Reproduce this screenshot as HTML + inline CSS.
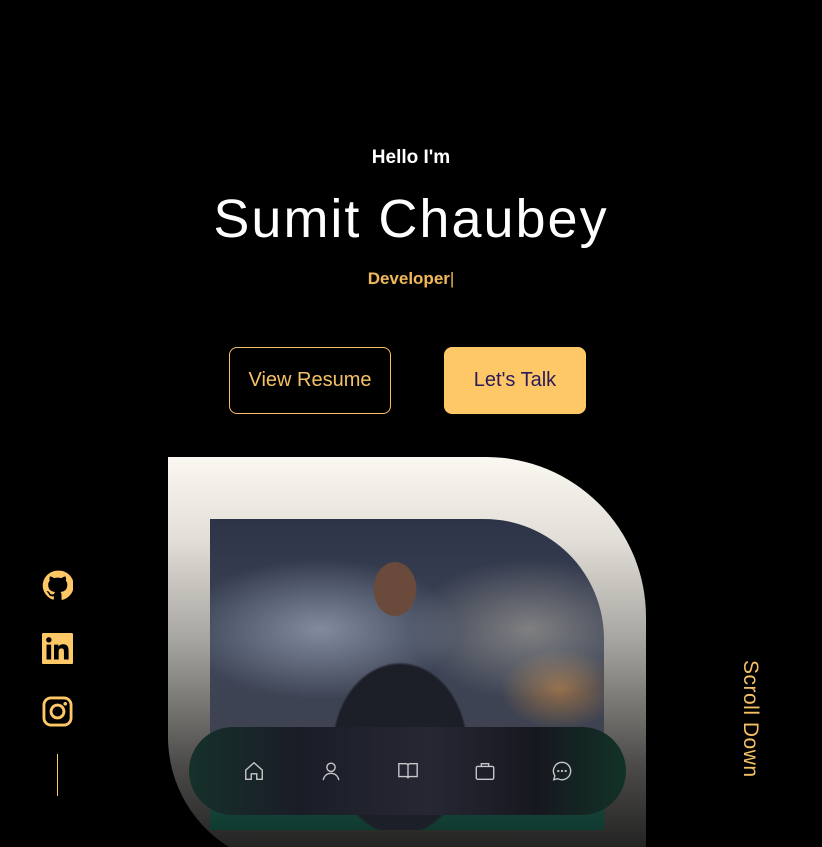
<!DOCTYPE html>
<html style="width:822px;height:847px;overflow:hidden"><head><style>
*{margin:0;padding:0;box-sizing:border-box}
body{width:822px;height:847px;background:#000;overflow:hidden;position:relative;font-family:"Liberation Sans",sans-serif}
.t{position:absolute;left:0;width:822px;text-align:center}
.btn{position:absolute;top:347px;height:67px;border-radius:8px;font-size:20px;display:flex;align-items:center;justify-content:center}
.card{position:absolute;left:168px;top:457px;width:478px;height:410px;border-radius:0 160px 0 130px;background:linear-gradient(180deg,#fbf8f1 0%,#e2ded8 20%,#a6a49f 45%,#4c4b49 75%,#1a1a1a 100%)}
.photo{position:absolute;left:210px;top:519px;width:394px;height:311px;border-radius:0 120px 0 0;overflow:hidden;background:
radial-gradient(ellipse 110px 140px at 190px 230px,#1c1e28 60%,transparent 62%),
radial-gradient(ellipse 30px 38px at 185px 70px,#6a4a3a 70%,transparent 72%),
radial-gradient(ellipse 140px 70px at 110px 110px,rgba(200,210,230,.5),transparent),
radial-gradient(ellipse 120px 70px at 320px 110px,rgba(210,200,180,.45),transparent),
radial-gradient(ellipse 60px 40px at 350px 170px,rgba(230,150,60,.5),transparent),
linear-gradient(180deg,#2e3448 0%,#3d4558 40%,#3e4250 70%,#1d4a3e 85%,#0f3a30 100%)}
.nav{position:absolute;left:189px;top:727px;width:437px;height:88px;border-radius:44px;background:linear-gradient(90deg,#16302a 0%,#1a1d27 25%,#262733 55%,#16181f 80%,#123226 100%);display:flex;align-items:center;justify-content:center;gap:55px}
.nav svg{width:22px;height:22px;stroke:#c8c8cc;fill:none;stroke-width:1.5}
.soc{position:absolute;left:42px;width:31px;height:31px}
</style></head><body>
<div class="t" style="top:147px;font-size:19px;font-weight:bold;color:#fff">Hello I'm</div>
<div class="t" style="top:188px;font-size:54px;color:#fff;letter-spacing:2px">Sumit Chaubey</div>
<div class="t" style="top:269px;font-size:17px;font-weight:bold;color:#f2b95a">Developer<span style="font-weight:normal">|</span></div>
<div class="btn" style="left:229px;width:162px;border:1px solid #f6c165;color:#f6c165">View Resume</div>
<div class="btn" style="left:444px;width:142px;background:#fec867;color:#2b1a5a">Let's Talk</div>
<div class="card"></div>
<div class="photo"></div>
<div class="nav">
<svg viewBox="0 0 24 24"><path d="M3 11l9-8 9 8v10h-6v-6h-6v6H3z"/></svg>
<svg viewBox="0 0 24 24"><circle cx="12" cy="8" r="4.5"/><path d="M3.5 22c1-5 4.5-7.5 8.5-7.5s7.5 2.5 8.5 7.5"/></svg>
<svg viewBox="0 0 24 24"><path d="M2 4h8a2 2 0 0 1 2 2v14a2 2 0 0 0-2-2H2zM22 4h-8a2 2 0 0 0-2 2v14a2 2 0 0 1 2-2h8z"/></svg>
<svg viewBox="0 0 24 24"><rect x="2.5" y="7" width="19" height="14" rx="1.5"/><path d="M8 7V4h8v3"/></svg>
<svg viewBox="0 0 24 24"><path d="M12 2.5a9.5 9.5 0 1 1-4.5 17.9L3 21.5l1.2-4.3A9.5 9.5 0 0 1 12 2.5z"/><circle cx="8" cy="12" r=".5"/><circle cx="12" cy="12" r=".5"/><circle cx="16" cy="12" r=".5"/></svg>
</div>
<svg class="soc" style="top:570px" viewBox="0 0 24 24"><path fill="#fec867" d="M12 .5a11.5 11.5 0 0 0-3.6 22.4c.6.1.8-.3.8-.6v-2c-3.2.7-3.900-1.5-3.900-1.5-.5-1.3-1.300-1.7-1.300-1.7-1-.7.1-.7.1-.7 1.2.1 1.800 1.200 1.800 1.200 1 1.800 2.800 1.300 3.500 1 .1-.8.4-1.300.7-1.600-2.600-.3-5.300-1.300-5.300-5.700 0-1.300.5-2.300 1.200-3.100-.1-.3-.5-1.500.1-3.100 0 0 1-.3 3.200 1.200a11 11 0 0 1 5.800 0c2.200-1.500 3.200-1.200 3.200-1.200.6 1.600.2 2.800.1 3.100.8.8 1.200 1.900 1.200 3.100 0 4.400-2.700 5.400-5.300 5.700.4.4.8 1.100.8 2.200v3.300c0 .3.2.7.8.6A11.5 11.5 0 0 0 12 .5z"/></svg>
<svg class="soc" style="top:633px" viewBox="0 0 24 24"><rect x="0" y="0" width="24" height="24" rx="1" fill="#fec867"/><rect x="3.5" y="9" width="3.6" height="11.5" fill="#000"/><circle cx="5.3" cy="5.3" r="2.1" fill="#000"/><path fill="#000" d="M9.3 9h3.4v1.6c.5-.9 1.7-1.9 3.6-1.9 3.7 0 4.3 2.4 4.3 5.5v6.3H17v-5.6c0-1.3 0-3-1.9-3s-2.2 1.4-2.2 2.9v5.7H9.3z"/></svg>
<svg class="soc" style="top:696px" viewBox="0 0 24 24"><rect x="1.5" y="1.5" width="21" height="21" rx="5.5" fill="none" stroke="#fec867" stroke-width="2.2"/><circle cx="12" cy="12" r="5" fill="none" stroke="#fec867" stroke-width="2.2"/><circle cx="18" cy="6" r="1.4" fill="#fec867"/></svg>
<div style="position:absolute;left:57px;top:754px;width:1px;height:42px;background:#fec867"></div>
<div style="position:absolute;left:738px;top:660px;writing-mode:vertical-rl;font-size:21px;color:#f6c165;letter-spacing:.5px">Scroll Down</div>
</body></html>
